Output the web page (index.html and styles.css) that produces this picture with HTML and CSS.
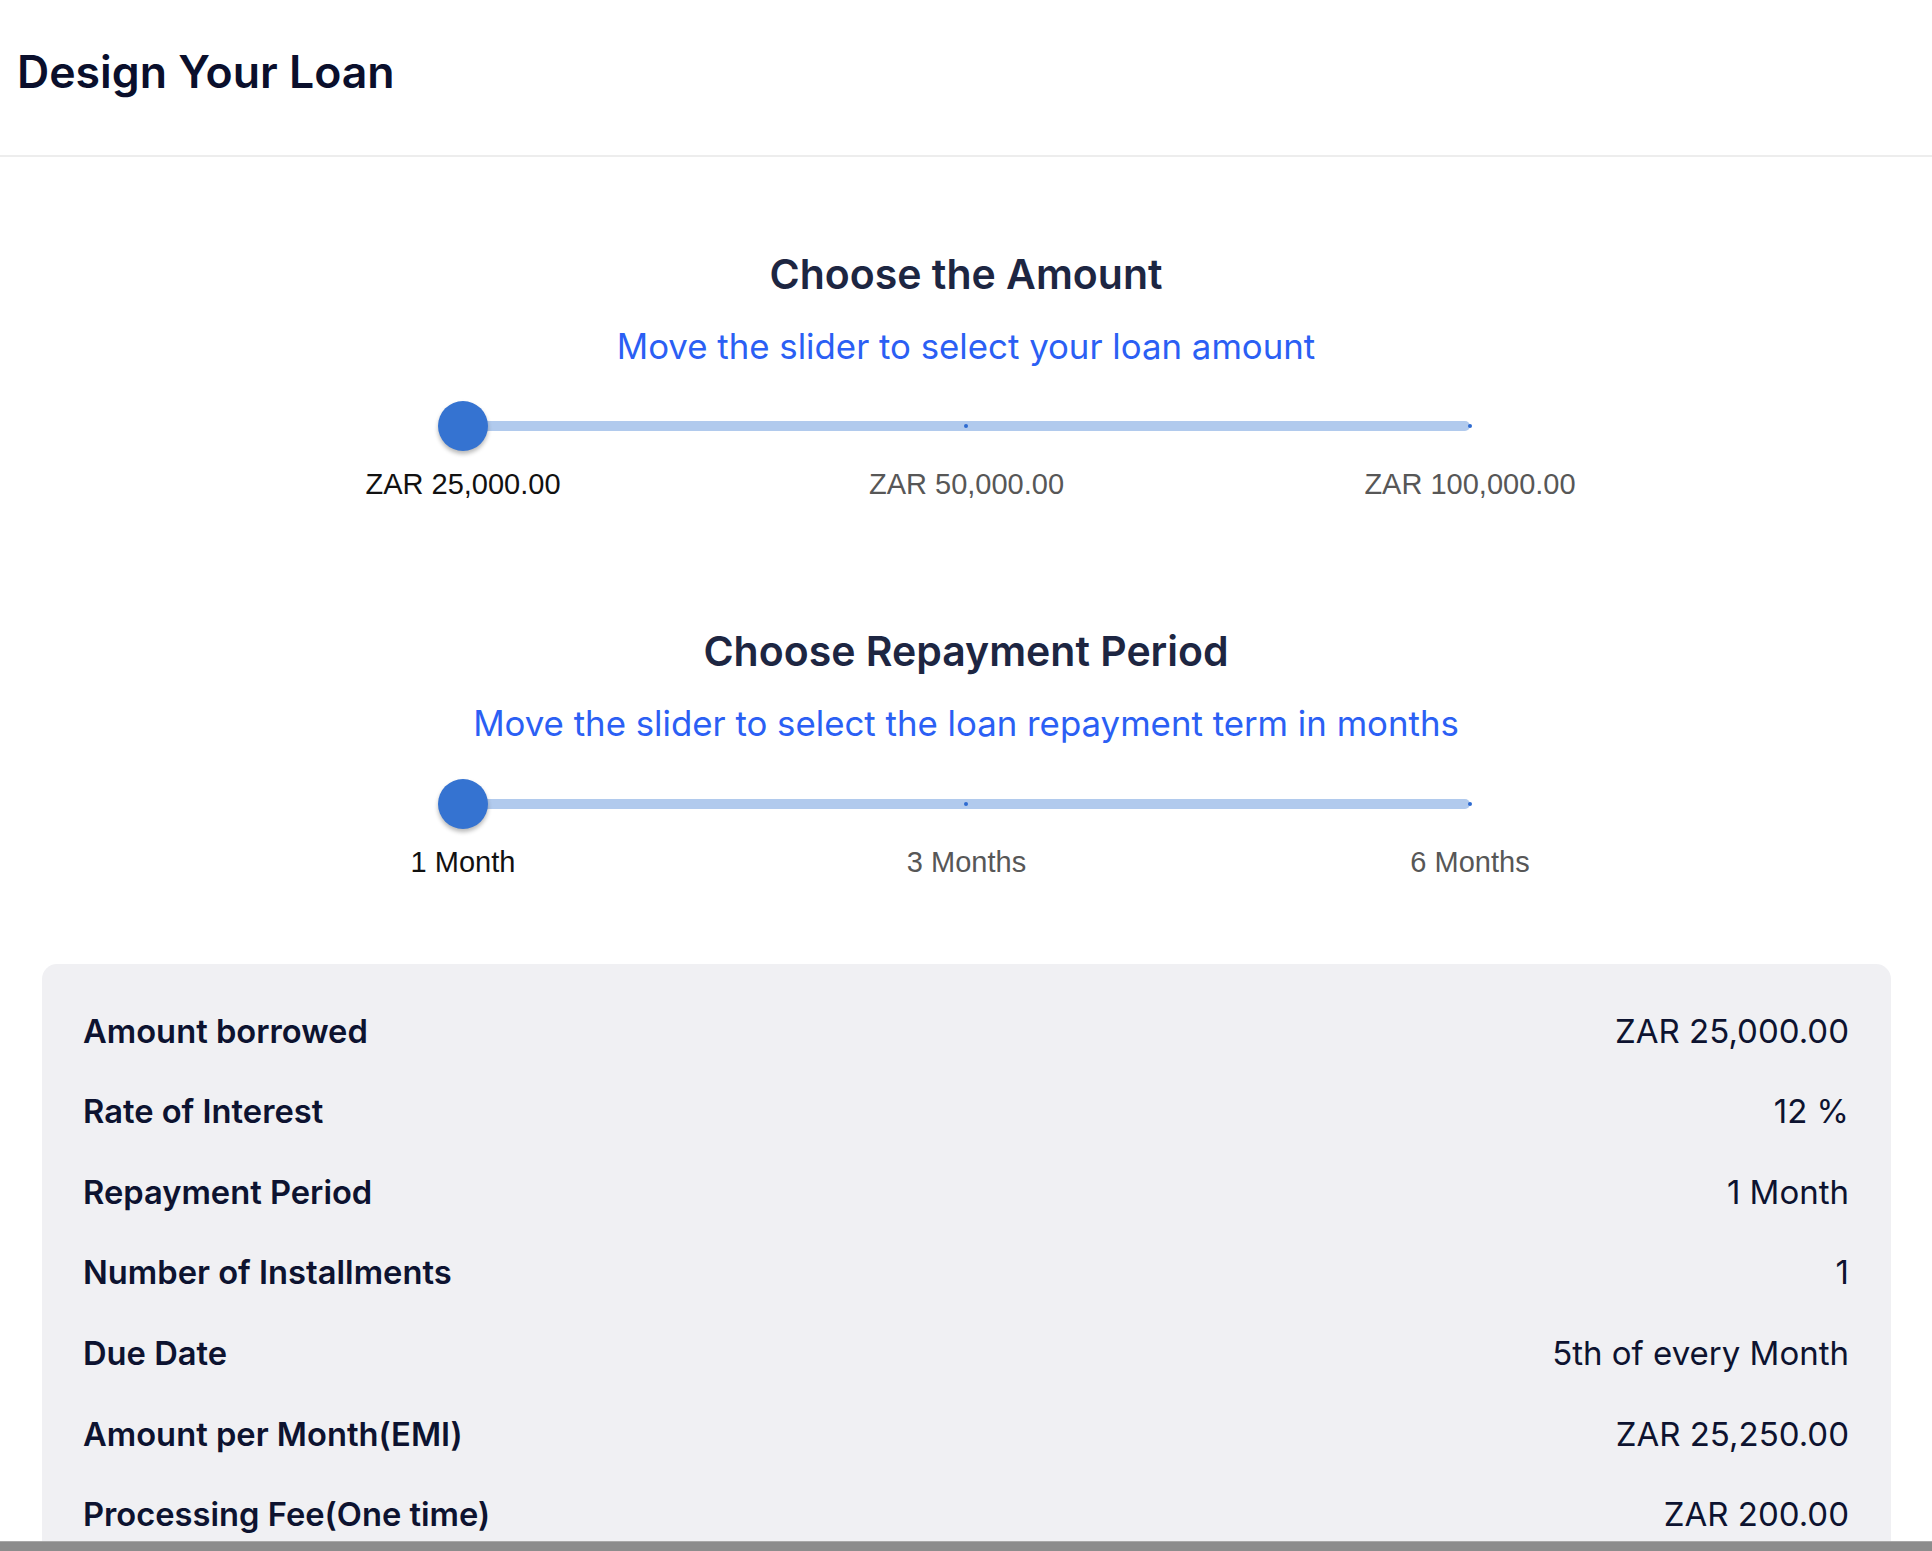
FILE: index.html
```html
<!DOCTYPE html>
<html lang="en">
<head>
<meta charset="utf-8">
<title>Design Your Loan</title>
<link rel="stylesheet" href="styles.css">
</head>
<body>
<div class="page">
  <header class="header">
    <h1 class="title">Design Your Loan</h1>
  </header>
  <main class="main">
    <section class="chooser chooser-amount">
      <h2 class="chooser-title">Choose the Amount</h2>
      <p class="chooser-sub">Move the slider to select your loan amount</p>
      <div class="slider">
        <div class="track">
          <span class="tick tick-mid"></span>
          <span class="tick tick-end"></span>
          <span class="thumb"></span>
        </div>
        <div class="ticks-labels">
          <span class="tl active"><span>ZAR 25,000.00</span></span>
          <span class="tl"><span>ZAR 50,000.00</span></span>
          <span class="tl"><span>ZAR 100,000.00</span></span>
        </div>
      </div>
    </section>
    <section class="chooser chooser-period">
      <h2 class="chooser-title">Choose Repayment Period</h2>
      <p class="chooser-sub">Move the slider to select the loan repayment term in months</p>
      <div class="slider">
        <div class="track">
          <span class="tick tick-mid"></span>
          <span class="tick tick-end"></span>
          <span class="thumb"></span>
        </div>
        <div class="ticks-labels">
          <span class="tl active"><span>1 Month</span></span>
          <span class="tl"><span>3 Months</span></span>
          <span class="tl"><span>6 Months</span></span>
        </div>
      </div>
    </section>
    <section class="summary">
      <div class="row"><span class="label">Amount borrowed</span><span class="value">ZAR 25,000.00</span></div>
      <div class="row"><span class="label">Rate of Interest</span><span class="value">12 %</span></div>
      <div class="row"><span class="label">Repayment Period</span><span class="value">1 Month</span></div>
      <div class="row"><span class="label">Number of Installments</span><span class="value">1</span></div>
      <div class="row"><span class="label">Due Date</span><span class="value">5th of every Month</span></div>
      <div class="row"><span class="label">Amount per Month(EMI)</span><span class="value">ZAR 25,250.00</span></div>
      <div class="row"><span class="label">Processing Fee(One time)</span><span class="value">ZAR 200.00</span></div>
    </section>
  </main>
  <div class="bottom-bar"></div>
</div>
</body>
</html>
```

FILE: styles.css
```css
* { box-sizing: border-box; }
html, body { margin: 0; padding: 0; }
body {
  font-family: Inter, "Noto Sans", sans-serif;
  background: #ffffff;
  color: #0d1330;
}
.page {
  height: 1551px;
  display: flex;
  flex-direction: column;
  overflow: hidden;
}
.header {
  height: 157px;
  padding: 50px 0 0 17px;
  border-bottom: 2px solid #ededed;
  flex: none;
}
.title {
  margin: 0;
  font-size: 44.6px;
  line-height: 1;
  font-weight: 600;
  color: #0a0f2c;
}
.main {
  flex: 1;
  overflow: hidden;
  display: flex;
  flex-direction: column;
  align-items: center;
}
.chooser {
  display: flex;
  flex-direction: column;
  align-items: center;
  width: 100%;
  flex: none;
}
.chooser-amount { margin-top: 97px; }
.chooser-period { margin-top: 132.2px; }
.chooser-title {
  margin: 0;
  font-size: 41px;
  line-height: 1;
  font-weight: 600;
  color: #1d2642;
}
.chooser-sub {
  margin: 33.8px 0 0;
  font-size: 34.8px;
  line-height: 1;
  font-weight: 400;
  color: #2b5ff4;
}
.slider {
  width: 1007px;
  margin-top: 37.7px;
  margin-left: 1px;
}
.track {
  position: relative;
  height: 50px;
}
.track::before {
  content: "";
  position: absolute;
  left: 0;
  right: 0;
  top: 20px;
  height: 10px;
  border-radius: 5px;
  background: #b1caed;
}
.tick {
  position: absolute;
  top: 23px;
  width: 4px;
  height: 4px;
  border-radius: 50%;
  background: #2f6bd0;
}
.tick-mid { left: 501px; }
.tick-end { right: -2px; }
.thumb {
  position: absolute;
  left: -25px;
  top: 0;
  width: 50px;
  height: 50px;
  border-radius: 50%;
  background: #3573d1;
  box-shadow: 0 3px 4px rgba(0, 0, 0, 0.28);
}
.ticks-labels {
  display: flex;
  justify-content: space-between;
  margin-top: 19px;
}
.tl {
  width: 0;
  display: flex;
  justify-content: center;
  white-space: nowrap;
  font-family: "Liberation Sans", Arial, sans-serif;
  font-size: 29px;
  line-height: 1;
  color: #575757;
}
.tl.active { color: #111111; }
.summary {
  align-self: stretch;
  margin: 87px 41px 0 42px;
  background: #f0f0f3;
  border-radius: 15px;
  padding: 27px 42px 0 41px;
  flex: none;
}
.row {
  display: flex;
  justify-content: space-between;
  align-items: center;
  height: 80.6px;
  line-height: 1;
}
.label {
  font-size: 32.7px;
  font-weight: 600;
  color: #0d1330;
}
.value {
  font-size: 33px;
  font-weight: 400;
  color: #0d1330;
}
.bottom-bar {
  flex: none;
  height: 10px;
  background: #8c8c8c;
  border-top: 1px solid #a8a8a8;
}
```
